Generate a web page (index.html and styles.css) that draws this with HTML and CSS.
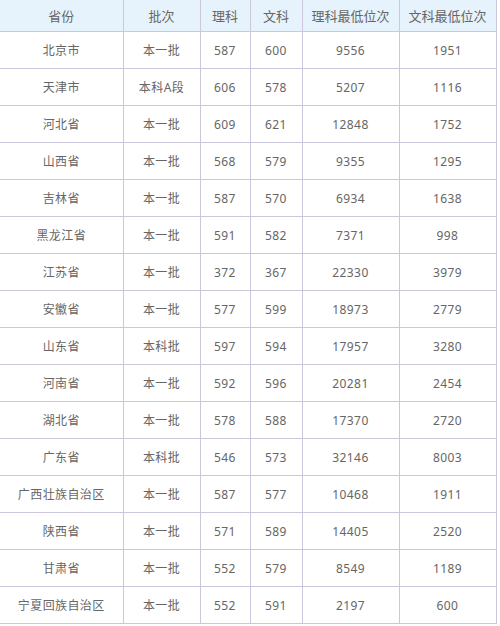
FILE: index.html
```html
<!DOCTYPE html>
<html lang="zh">
<head>
<meta charset="utf-8">
<link rel="stylesheet" href="styles.css">
</head>
<body>
<table class="score">
<colgroup>
<col class="c1"><col class="c2"><col class="c3"><col class="c4"><col class="c5"><col class="c6">
</colgroup>
<thead>
<tr><th>省份</th><th>批次</th><th>理科</th><th>文科</th><th>理科最低位次</th><th>文科最低位次</th></tr>
</thead>
<tbody>
<tr><td>北京市</td><td>本一批</td><td>587</td><td>600</td><td>9556</td><td>1951</td></tr>
<tr><td>天津市</td><td>本科A段</td><td>606</td><td>578</td><td>5207</td><td>1116</td></tr>
<tr><td>河北省</td><td>本一批</td><td>609</td><td>621</td><td>12848</td><td>1752</td></tr>
<tr><td>山西省</td><td>本一批</td><td>568</td><td>579</td><td>9355</td><td>1295</td></tr>
<tr><td>吉林省</td><td>本一批</td><td>587</td><td>570</td><td>6934</td><td>1638</td></tr>
<tr><td>黑龙江省</td><td>本一批</td><td>591</td><td>582</td><td>7371</td><td>998</td></tr>
<tr><td>江苏省</td><td>本一批</td><td>372</td><td>367</td><td>22330</td><td>3979</td></tr>
<tr><td>安徽省</td><td>本一批</td><td>577</td><td>599</td><td>18973</td><td>2779</td></tr>
<tr><td>山东省</td><td>本科批</td><td>597</td><td>594</td><td>17957</td><td>3280</td></tr>
<tr><td>河南省</td><td>本一批</td><td>592</td><td>596</td><td>20281</td><td>2454</td></tr>
<tr><td>湖北省</td><td>本一批</td><td>578</td><td>588</td><td>17370</td><td>2720</td></tr>
<tr><td>广东省</td><td>本科批</td><td>546</td><td>573</td><td>32146</td><td>8003</td></tr>
<tr><td>广西壮族自治区</td><td>本一批</td><td>587</td><td>577</td><td>10468</td><td>1911</td></tr>
<tr><td>陕西省</td><td>本一批</td><td>571</td><td>589</td><td>14405</td><td>2520</td></tr>
<tr><td>甘肃省</td><td>本一批</td><td>552</td><td>579</td><td>8549</td><td>1189</td></tr>
<tr><td>宁夏回族自治区</td><td>本一批</td><td>552</td><td>591</td><td>2197</td><td>600</td></tr>
</tbody>
</table>
</body>
</html>
```

FILE: styles.css
```css
html, body {
  margin: 0;
  padding: 0;
  background: #ffffff;
}

.score {
  border-collapse: collapse;
  table-layout: fixed;
  width: 496px;
  font-family: "Noto Sans", "Noto Sans CJK SC", sans-serif;
  color: #666666;
}

.c1 { width: 123px; }
.c2 { width: 77px; }
.c3 { width: 50px; }
.c4 { width: 52px; }
.c5 { width: 97px; }
.c6 { width: 97px; }

.score th,
.score td {
  border: 1px solid #cbc8de;
  padding: 0;
  text-align: center;
  vertical-align: middle;
  font-weight: normal;
}

.score th {
  height: 31px;
  font-size: 13px;
  background: #e6f3fc;
  border-top: none;
}

.score td {
  height: 36px;
  font-size: 12px;
  letter-spacing: 0.4px;
}

.score tr > :first-child {
  border-left: none;
}
```
